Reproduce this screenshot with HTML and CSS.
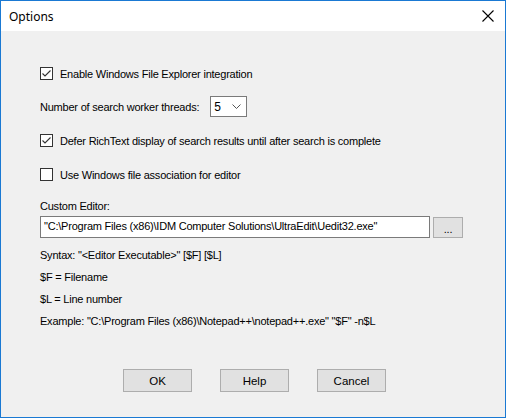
FILE: index.html
```html
<!DOCTYPE html>
<html>
<head>
<meta charset="utf-8">
<link rel="stylesheet" href="styles.css">
</head>
<body>
<div class="window">
  <div class="titlebar">
    <span class="title">Options</span>
    <svg class="close" width="12" height="12" viewBox="0 0 12 12"><path d="M0.5 0.5 L11.5 11.5 M11.5 0.5 L0.5 11.5" stroke="#000" stroke-width="1.1" fill="none"/></svg>
  </div>
  <div class="content">
    <label class="check row1"><span class="box checked"><svg width="11" height="11" viewBox="0 0 11 11"><path d="M1.5 5.5 L4 8 L9.5 2.5" stroke="#333" stroke-width="1.1" fill="none"/></svg></span>Enable Windows File Explorer integration</label>
    <div class="threads"><span>Number of search worker threads:</span><div class="select"><span>5</span><svg width="9" height="6" viewBox="0 0 9 6"><path d="M0.5 0.5 L4.5 4.5 L8.5 0.5" stroke="#555" fill="none"/></svg></div></div>
    <label class="check row2"><span class="box checked"><svg width="11" height="11" viewBox="0 0 11 11"><path d="M1.5 5.5 L4 8 L9.5 2.5" stroke="#333" stroke-width="1.1" fill="none"/></svg></span>Defer RichText display of search results until after search is complete</label>
    <label class="check row3"><span class="box"></span>Use Windows file association for editor</label>
    <div class="editor-label">Custom Editor:</div>
    <div class="editor-row">
      <div class="input">"C:\Program Files (x86)\IDM Computer Solutions\UltraEdit\Uedit32.exe"</div>
      <div class="browse">...</div>
    </div>
    <div class="info i1">Syntax: "&lt;Editor Executable&gt;" [$F] [$L]</div>
    <div class="info i2">$F = Filename</div>
    <div class="info i3">$L = Line number</div>
    <div class="info i4">Example: "C:\Program Files (x86)\Notepad++\notepad++.exe" "$F" -n$L</div>
    <div class="buttons">
      <div class="btn">OK</div>
      <div class="btn">Help</div>
      <div class="btn">Cancel</div>
    </div>
  </div>
</div>
</body>
</html>
```
FILE: styles.css
```css
html, body { margin: 0; padding: 0; }
body { width: 506px; height: 418px; overflow: hidden; }
.window {
  box-sizing: border-box;
  width: 506px; height: 418px;
  border: 1px solid #1a79d3;
  background: #f0f0f0;
  display: flex; flex-direction: column;
  font-family: "Liberation Sans", Arial, sans-serif;
  font-size: 11px;
  letter-spacing: -0.22px;
  color: #000;
}
.titlebar {
  height: 30px; background: #fff;
  display: flex; align-items: center; justify-content: space-between;
  padding: 0 11px 0 8px;
  letter-spacing: 0;
}
.title { font-family: "Noto Sans", "Open Sans", sans-serif; font-size: 12px; color: #000; }
.close { display: block; }
.content { flex: 1; padding: 0 0 0 39px; display: flex; flex-direction: column; }
.check { display: flex; align-items: center; height: 13px; }
.box {
  box-sizing: border-box; width: 13px; height: 13px;
  border: 1px solid #333; background: #fff; margin-right: 7px;
  display: flex; align-items: center; justify-content: center;
}
.row1 { margin-top: 36px; }
.threads { display: flex; align-items: center; margin-top: 16px; height: 21px; }
.select {
  box-sizing: border-box; width: 37px; height: 21px;
  border: 1px solid #7a7a7a; background: #fff;
  margin-left: 11px; display: flex; align-items: center; justify-content: space-between;
  padding: 0 5px 0 3px; font-size: 12px;
}
.row2 { margin-top: 17px; }
.row3 { margin-top: 21px; }
.editor-label { margin-top: 19px; line-height: 13px; }
.editor-row { display: flex; margin-top: 3px; align-items: center; }
.input {
  box-sizing: border-box; width: 390px; height: 22px;
  border: 1px solid #7a7a7a; background: #fff;
  padding: 3px 0 0 3px; white-space: nowrap;
}
.browse {
  box-sizing: border-box; width: 30px; height: 21px; margin-left: 3px;
  border: 1px solid #adadad; background: #e1e1e1;
  display: flex; justify-content: center; align-items: flex-end; padding-bottom: 4px; line-height: 8px;
}
.info { line-height: 13px; }
.i1 { margin-top: 11px; }
.i2 { margin-top: 9px; }
.i3 { margin-top: 9px; }
.i4 { margin-top: 9px; }
.buttons { display: flex; gap: 28px; margin-top: 41px; padding-left: 83px; }
.btn {
  box-sizing: border-box; width: 69px; height: 23px;
  border: 1px solid #adadad; background: #e1e1e1;
  display: flex; align-items: center; justify-content: center; font-size: 11.5px; letter-spacing: 0;
}
```
